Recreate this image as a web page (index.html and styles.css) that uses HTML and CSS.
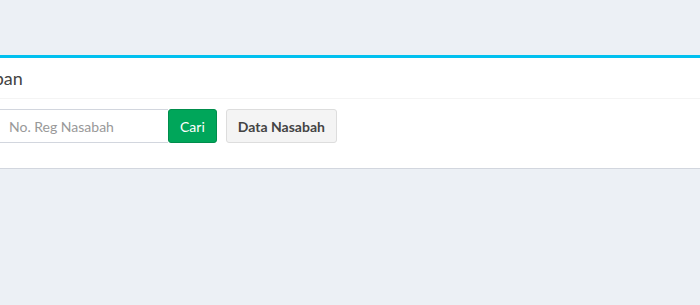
FILE: index.html
```html
<!DOCTYPE html>
<html lang="en">
<head>
  <meta charset="UTF-8">
  <meta name="viewport" content="width=device-width, initial-scale=1.0">
  <title>Pembayaran Kewajiban</title>
  <link rel="stylesheet" href="styles.css">
</head>
<body>
  <section class="content">
    <div class="box box-info">
      <div class="box-header">
        <h3 class="box-title">Pembayaran Kewajiban</h3>
      </div>
      <div class="box-body">
        <form class="form-group">
          <div class="input-group">
            <input type="text" class="form-control" placeholder="No. Reg Nasabah">
            <button type="submit" class="btn btn-success">Cari</button>
          </div>
          <button type="button" class="btn btn-default">Data Nasabah</button>
        </form>
      </div>
    </div>
  </section>
</body>
</html>
```

FILE: styles.css
```css
body {
  margin: 0;
  background: #ecf0f5;
  font-family: 'Lato', 'Liberation Sans', sans-serif;
  font-size: 14px;
  color: #333;
  overflow: hidden;
}

.content {
  padding-top: 55px;
}

/* box keeps going past both edges of the window */
.box {
  margin-left: -170px;
  width: 1000px;
  background: #fff;
  border-top: 3px solid #00c0ef;
  border-bottom: 1px solid #d2d6de;
  border-radius: 3px;
  box-shadow: 0 1px 1px rgba(0, 0, 0, 0.1);
}

.box-header {
  padding: 10px;
  border-bottom: 1px solid #f4f4f4;
}

.box-title {
  margin: 0;
  font-size: 18px;
  font-weight: normal;
  line-height: 20px;
  color: #444;
}

.box-body {
  padding: 10px 10px 0;
}

.form-group {
  display: flex;
  align-items: flex-start;
  gap: 9px;
  margin: 0 0 25px 156px;
}

.input-group {
  display: flex;
}

.form-control {
  width: 172px;
  height: 34px;
  box-sizing: border-box;
  padding: 6px 12px;
  border: 1px solid #d2d6de;
  border-right: none;
  font-family: inherit;
  font-size: 14px;
  color: #555;
  outline: none;
}

.form-control::placeholder {
  color: #999;
}

.btn {
  height: 34px;
  box-sizing: border-box;
  padding: 6px 12px;
  font-family: inherit;
  font-size: 14px;
  border-radius: 3px;
  cursor: pointer;
}

.btn-success {
  background: #00a65a;
  border: 1px solid #008d4c;
  color: #fff;
  padding: 6px 11px;
}

.btn-default {
  background: #f4f4f4;
  border: 1px solid #ddd;
  color: #444;
  font-weight: bold;
  padding: 6px 11px;
}
```
